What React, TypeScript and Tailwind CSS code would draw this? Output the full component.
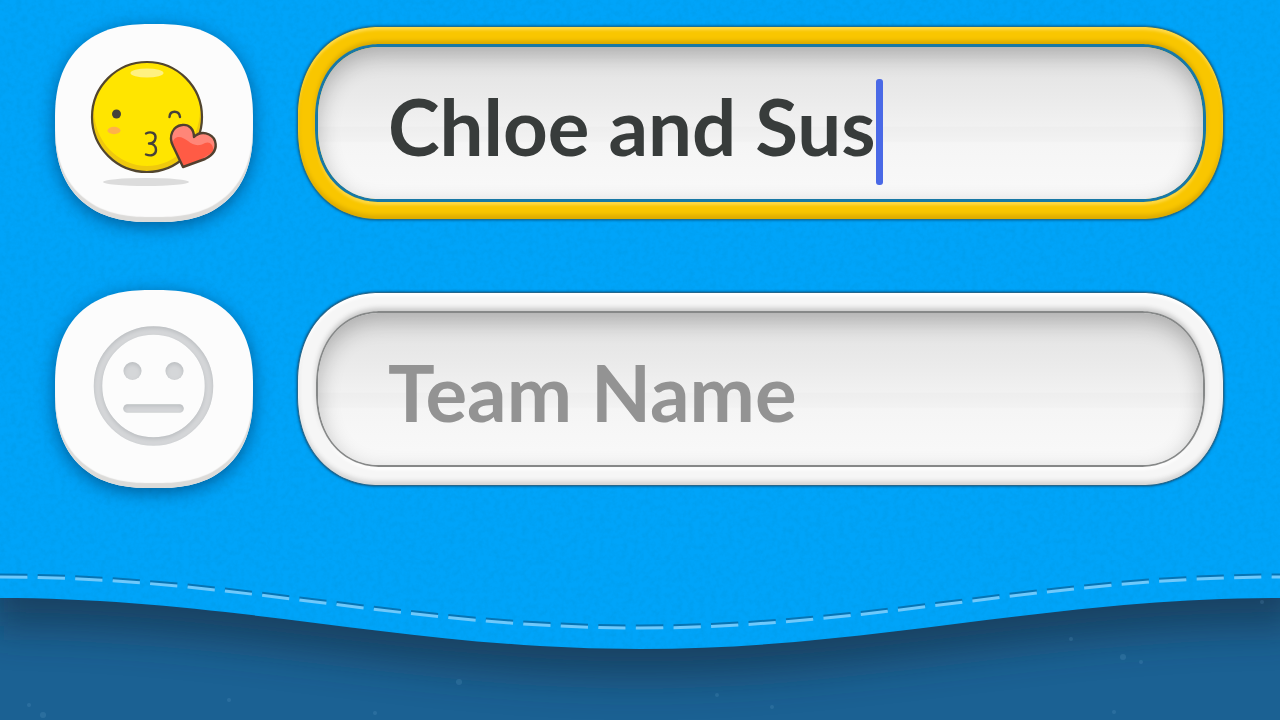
import { useState, type ReactNode } from "react";

function Grain() {
  return (
    <svg className="pointer-events-none absolute inset-0 h-full w-full" aria-hidden="true">
      <filter id="panel-grain" x="0" y="0" width="100%" height="100%">
        <feTurbulence type="fractalNoise" baseFrequency="0.18" numOctaves="3" seed="4" />
        <feColorMatrix values="0 0 0 0 0  0 0 0 0 0.2  0 0 0 0 0.4  1.6 0 0 0 -0.6" />
      </filter>
      <rect width="100%" height="100%" opacity="0.16" filter="url(#panel-grain)" />
    </svg>
  );
}

function KissFace() {
  return (
    <svg viewBox="-1 -2 150 150" className="size-[150px]" aria-hidden="true">
      <defs>
        <clipPath id="kiss-clip">
          <circle cx="67" cy="67" r="54" />
        </clipPath>
        <clipPath id="heart-clip">
          <path d="M103 117 L93 96 C88 86 93 76 102 75 C109 74 114 79 114 87 C121 80 132 83 135 91 C138 101 131 106 125 109 Z" />
        </clipPath>
      </defs>
      <ellipse cx="66" cy="132" rx="43" ry="4" fill="#dcdcdc" />
      <circle cx="67" cy="67" r="55" fill="#efc90d" />
      <g clipPath="url(#kiss-clip)">
        <ellipse cx="67" cy="60" rx="53" ry="56" fill="#ffe500" />
      </g>
      <circle cx="67" cy="67" r="55" fill="none" stroke="#51452f" strokeWidth="2.2" />
      <ellipse cx="67" cy="23" rx="16.5" ry="4.5" fill="#fff181" />
      <circle cx="36.5" cy="64" r="4.5" fill="#45413a" />
      <ellipse cx="34" cy="80.5" rx="6.5" ry="3.7" fill="#ffb249" />
      <g fill="none" stroke="#45413a" strokeWidth="2.4" strokeLinecap="round" strokeLinejoin="round">
        <path d="M89.5 67 C90 60 99 60 100 67" />
        <path d="M66 83.5 C71 81 76 83 75.5 88 C75 92 72 93.5 69 93.5 C73 93.5 76 96 76 100 C76 105 71 106.5 66 104.5" />
      </g>
      <g clipPath="url(#heart-clip)">
        <rect x="85" y="70" width="56" height="50" fill="#ff8678" />
        <path d="M92 93 C96 84 102 87 108 91 C113 95 118 97 125 93 C130 91 134 95 133 102 L104 120 Z" fill="#ff5b45" />
      </g>
      <path
        d="M103 117 L93 96 C88 86 93 76 102 75 C109 74 114 79 114 87 C121 80 132 83 135 91 C138 101 131 106 125 109 Z"
        fill="none"
        stroke="#51402f"
        strokeWidth="2.4"
        strokeLinejoin="round"
      />
    </svg>
  );
}

function NeutralFace() {
  return (
    <svg viewBox="0 0 150 150" className="size-[150px]" aria-hidden="true">
      <defs>
        <filter id="engraved" x="-10%" y="-10%" width="120%" height="120%">
          <feOffset in="SourceAlpha" dy="2" result="moved" />
          <feGaussianBlur in="moved" stdDeviation="2" result="soft" />
          <feComposite in="SourceAlpha" in2="soft" operator="out" result="edge" />
          <feFlood floodColor="#8e9499" floodOpacity="0.45" />
          <feComposite in2="edge" operator="in" result="shade" />
          <feMerge>
            <feMergeNode in="SourceGraphic" />
            <feMergeNode in="shade" />
          </feMerge>
        </filter>
      </defs>
      <g filter="url(#engraved)">
        <circle cx="74.5" cy="72" r="55.5" fill="none" stroke="#d5d7d9" strokeWidth="8.5" />
        <circle cx="53.5" cy="57" r="9" fill="#d5d7d9" />
        <circle cx="95.5" cy="57" r="9" fill="#d5d7d9" />
        <path d="M48.5 94.5 H100.5" stroke="#d5d7d9" strokeWidth="8.5" strokeLinecap="round" />
      </g>
    </svg>
  );
}

function EmojiButton({ label, children }: { label: string; children: ReactNode }) {
  return (
    <button
      type="button"
      aria-label={label}
      className="flex size-[198px] shrink-0 items-center justify-center rounded-[94px] bg-[#fcfcfc] shadow-[inset_0_-5px_1px_#dcdbd9,0_4px_18px_rgba(0,45,85,0.6)] [corner-shape:superellipse(1.25)]"
    >
      {children}
    </button>
  );
}

const frames = {
  active: {
    outer:
      "p-[17px] border-[#1c6f92] bg-[#f9c600] shadow-[inset_0_3px_3px_#ffda48,inset_0_-4px_4px_#dcab00,0_0_3px_rgba(0,40,70,0.7)]",
    inner: "border-3 border-[#1878a6] shadow-[0_-3px_4px_#d9a900,0_3px_3px_#ffda48]",
  },
  idle: {
    outer:
      "p-[18px] border-[#24678c] bg-[#f6f6f6] shadow-[inset_0_3px_3px_#ffffff,inset_0_-4px_4px_#d6d6d6,0_0_3px_rgba(0,30,60,0.8)]",
    inner: "border-2 border-[#868888] shadow-[0_-3px_5px_#c8c8c8,0_3px_3px_#ffffff]",
  },
};

function Field({ state, children }: { state: "active" | "idle"; children: ReactNode }) {
  return (
    <div
      className={`min-w-0 flex-1 rounded-[82px/90px] border [corner-shape:superellipse(1.1)] ${frames[state].outer}`}
    >
      <div className={`rounded-[65px/74px] [corner-shape:superellipse(1.1)] ${frames[state].inner}`}>
        <div className="flex h-[152px] items-center overflow-hidden rounded-[62px/71px] bg-[linear-gradient(#e0e0e0,#ebebeb_35%,#f1f1f1_52%,#eeeeee_53%,#f2f2f2_62%,#f5f5f5_63%,#f9f9f9)] pt-[6px] pl-[70px] shadow-[inset_0_8px_22px_rgba(0,0,0,0.24)] [corner-shape:superellipse(1.1)]">
          {children}
        </div>
      </div>
    </div>
  );
}

function WavyEdge() {
  return (
    <svg
      viewBox="0 0 1280 160"
      preserveAspectRatio="none"
      className="block h-[160px] w-full"
      aria-hidden="true"
    >
      <defs>
        <filter id="edge-blur" x="-10%" y="-50%" width="120%" height="250%">
          <feGaussianBlur stdDeviation="20" />
        </filter>
        <filter id="felt" x="0" y="0" width="100%" height="100%">
          <feTurbulence type="fractalNoise" baseFrequency="0.18" numOctaves="3" seed="4" />
          <feColorMatrix values="0 0 0 0 0  0 0 0 0 0.2  0 0 0 0 0.4  1.6 0 0 0 -0.6" />
          <feComposite in2="SourceAlpha" operator="in" />
        </filter>
      </defs>
      <path
        d="M-10 -40 V66 H0 C233 66 407 115 640 115 S1047 66 1280 66 H1300 V-40 Z"
        fill="#12304a"
        opacity="0.66"
        filter="url(#edge-blur)"
      />
      <g fill="#7cb5dc" opacity="0.16">
        <circle cx="29" cy="145" r="2" />
        <circle cx="43" cy="155" r="3" />
        <circle cx="229" cy="140" r="2" />
        <circle cx="375" cy="153" r="2" />
        <circle cx="459" cy="122" r="3" />
        <circle cx="717" cy="135" r="2" />
        <circle cx="772" cy="147" r="2" />
        <circle cx="1071" cy="79" r="2" />
        <circle cx="1123" cy="97" r="3" />
        <circle cx="1141" cy="102" r="2" />
        <circle cx="1114" cy="152" r="2" />
        <circle cx="1262" cy="42" r="2" />
      </g>
      <path d="M0 0 V38 C233 38 407 89 640 89 S1047 38 1280 38 V0 Z" fill="#00a4f9" />
      <path d="M0 0 V38 C233 38 407 89 640 89 S1047 38 1280 38 V0 Z" opacity="0.16" filter="url(#felt)" />
      <g fill="none" strokeDasharray="27.3 10.25">
        <path d="M0 15 C233 15 407 66 640 66 S1047 15 1280 15" stroke="#0674b4" strokeWidth="3" />
        <path d="M0 17 C233 17 407 68 640 68 S1047 17 1280 17" stroke="#6fc9fb" strokeWidth="3" />
      </g>
    </svg>
  );
}

const inputStyle =
  "min-w-0 bg-transparent font-['Lato',sans-serif] text-[78px] leading-[106px] font-bold text-[#383c3b] caret-transparent outline-none placeholder:text-[#939393] placeholder:opacity-100";

export default function App() {
  const [first, setFirst] = useState("Chloe and Sus");
  const [second, setSecond] = useState("");

  return (
    <main className="min-h-screen overflow-hidden bg-[#1b6193]">
      <form>
        <div className="relative bg-[#00a4f9] pt-[24px] pr-[56px] pb-[72px] pl-[55px]">
          <Grain />

          <div className="relative flex flex-col gap-[68px]">
            {/* First team */}
            <div className="flex items-center gap-[44px]">
              <EmojiButton label="Change emoji of first team">
                <KissFace />
              </EmojiButton>
              <Field state="active">
                <input
                  type="text"
                  aria-label="Team Name"
                  value={first}
                  onChange={(e) => setFirst(e.target.value)}
                  className={`field-sizing-content ${inputStyle}`}
                />
                <span className="mt-[12px] h-[106px] w-[7px] shrink-0 rounded-[3px] bg-[#4a69e6]" />
              </Field>
            </div>

            {/* Second team */}
            <div className="flex items-center gap-[44px]">
              <EmojiButton label="Choose emoji of second team">
                <NeutralFace />
              </EmojiButton>
              <Field state="idle">
                <input
                  type="text"
                  aria-label="Team Name"
                  placeholder="Team Name"
                  value={second}
                  onChange={(e) => setSecond(e.target.value)}
                  className={`w-full ${inputStyle}`}
                />
              </Field>
            </div>
          </div>
        </div>
      </form>

      <WavyEdge />
    </main>
  );
}
